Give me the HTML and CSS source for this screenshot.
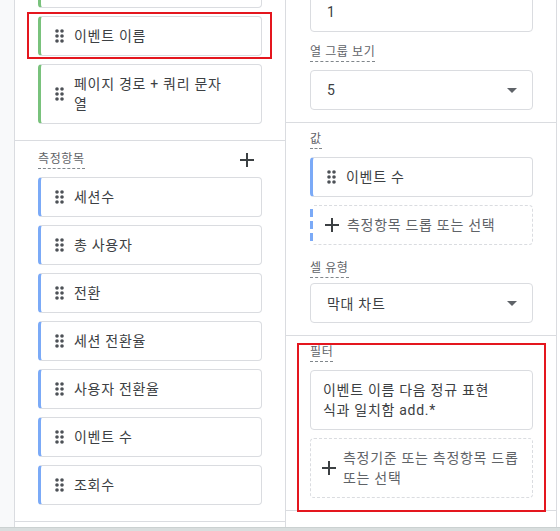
FILE: index.html
```html
<!DOCTYPE html>
<html lang="ko">

<head>
    <meta charset="UTF-8">
    <meta name="viewport" content="width=device-width, initial-scale=1.0">
    <title>탐색 분석</title>
    <link rel="stylesheet" href="styles.css">
</head>

<body>
    <div class="app">
        <div class="rail"></div>

        <!-- 변수 패널 -->
        <div class="panel vars">
            <section class="sec">
                <div class="chip dim stub"></div>
                <div class="chip dim">
                    <svg class="handle" viewBox="0 0 9 14"><circle cx="2" cy="2" r="1.8"/><circle cx="7" cy="2" r="1.8"/><circle cx="2" cy="7" r="1.8"/><circle cx="7" cy="7" r="1.8"/><circle cx="2" cy="12" r="1.8"/><circle cx="7" cy="12" r="1.8"/></svg>
                    <span class="chip-text">이벤트 이름</span>
                </div>
                <div class="chip dim">
                    <svg class="handle" viewBox="0 0 9 14"><circle cx="2" cy="2" r="1.8"/><circle cx="7" cy="2" r="1.8"/><circle cx="2" cy="7" r="1.8"/><circle cx="7" cy="7" r="1.8"/><circle cx="2" cy="12" r="1.8"/><circle cx="7" cy="12" r="1.8"/></svg>
                    <span class="chip-text">페이지 경로 + 쿼리 문자열</span>
                </div>
            </section>

            <section class="sec metrics">
                <div class="sec-head">
                    <span class="label">측정항목</span>
                    <svg class="plus" viewBox="0 0 14 14"><path d="M7 0v14M0 7h14"/></svg>
                </div>
                <div class="chip met">
                    <svg class="handle" viewBox="0 0 9 14"><circle cx="2" cy="2" r="1.8"/><circle cx="7" cy="2" r="1.8"/><circle cx="2" cy="7" r="1.8"/><circle cx="7" cy="7" r="1.8"/><circle cx="2" cy="12" r="1.8"/><circle cx="7" cy="12" r="1.8"/></svg>
                    <span class="chip-text">세션수</span>
                </div>
                <div class="chip met">
                    <svg class="handle" viewBox="0 0 9 14"><circle cx="2" cy="2" r="1.8"/><circle cx="7" cy="2" r="1.8"/><circle cx="2" cy="7" r="1.8"/><circle cx="7" cy="7" r="1.8"/><circle cx="2" cy="12" r="1.8"/><circle cx="7" cy="12" r="1.8"/></svg>
                    <span class="chip-text">총 사용자</span>
                </div>
                <div class="chip met">
                    <svg class="handle" viewBox="0 0 9 14"><circle cx="2" cy="2" r="1.8"/><circle cx="7" cy="2" r="1.8"/><circle cx="2" cy="7" r="1.8"/><circle cx="7" cy="7" r="1.8"/><circle cx="2" cy="12" r="1.8"/><circle cx="7" cy="12" r="1.8"/></svg>
                    <span class="chip-text">전환</span>
                </div>
                <div class="chip met">
                    <svg class="handle" viewBox="0 0 9 14"><circle cx="2" cy="2" r="1.8"/><circle cx="7" cy="2" r="1.8"/><circle cx="2" cy="7" r="1.8"/><circle cx="7" cy="7" r="1.8"/><circle cx="2" cy="12" r="1.8"/><circle cx="7" cy="12" r="1.8"/></svg>
                    <span class="chip-text">세션 전환율</span>
                </div>
                <div class="chip met">
                    <svg class="handle" viewBox="0 0 9 14"><circle cx="2" cy="2" r="1.8"/><circle cx="7" cy="2" r="1.8"/><circle cx="2" cy="7" r="1.8"/><circle cx="7" cy="7" r="1.8"/><circle cx="2" cy="12" r="1.8"/><circle cx="7" cy="12" r="1.8"/></svg>
                    <span class="chip-text">사용자 전환율</span>
                </div>
                <div class="chip met">
                    <svg class="handle" viewBox="0 0 9 14"><circle cx="2" cy="2" r="1.8"/><circle cx="7" cy="2" r="1.8"/><circle cx="2" cy="7" r="1.8"/><circle cx="7" cy="7" r="1.8"/><circle cx="2" cy="12" r="1.8"/><circle cx="7" cy="12" r="1.8"/></svg>
                    <span class="chip-text">이벤트 수</span>
                </div>
                <div class="chip met">
                    <svg class="handle" viewBox="0 0 9 14"><circle cx="2" cy="2" r="1.8"/><circle cx="7" cy="2" r="1.8"/><circle cx="2" cy="7" r="1.8"/><circle cx="7" cy="7" r="1.8"/><circle cx="2" cy="12" r="1.8"/><circle cx="7" cy="12" r="1.8"/></svg>
                    <span class="chip-text">조회수</span>
                </div>
            </section>

            <div class="mark mark-dim"></div>
        </div>

        <!-- 탭 설정 패널 -->
        <div class="panel settings">
            <section class="sec first">
                <div class="field">1</div>
                <span class="label">열 그룹 보기</span>
                <div class="field select">5<i class="caret"></i></div>
            </section>

            <section class="sec">
                <span class="label">값</span>
                <div class="chip met">
                    <svg class="handle" viewBox="0 0 9 14"><circle cx="2" cy="2" r="1.8"/><circle cx="7" cy="2" r="1.8"/><circle cx="2" cy="7" r="1.8"/><circle cx="7" cy="7" r="1.8"/><circle cx="2" cy="12" r="1.8"/><circle cx="7" cy="12" r="1.8"/></svg>
                    <span class="chip-text">이벤트 수</span>
                </div>
                <div class="drop drop-met">
                    <svg class="plus" viewBox="0 0 14 14"><path d="M7 0v14M0 7h14"/></svg>
                    <span>측정항목 드롭 또는 선택</span>
                </div>
                <span class="label gap-top">셀 유형</span>
                <div class="field select tight">막대 차트<i class="caret"></i></div>
            </section>

            <section class="sec">
                <span class="label">필터</span>
                <div class="filter">이벤트 이름 다음 정규 표현식과 일치함 add.*</div>
                <div class="drop">
                    <svg class="plus" viewBox="0 0 14 14"><path d="M7 0v14M0 7h14"/></svg>
                    <span>측정기준 또는 측정항목 드롭 또는 선택</span>
                </div>
            </section>

            <div class="mark mark-filter"></div>
        </div>
    </div>
    <div class="bottom-bar"></div>
</body>

</html>
```

FILE: styles.css
```css
* {
    box-sizing: border-box;
    margin: 0;
    padding: 0;
}

body {
    width: 560px;
    height: 531px;
    overflow: hidden;
    background: #fff;
    font-family: Roboto, "Noto Sans CJK KR", sans-serif;
    font-size: 14px;
    letter-spacing: 0.7px;
    color: #3c4043;
}

.app {
    display: flex;
    height: 527px;
}

.rail {
    width: 14px;
    background: #f8f9fa;
}

.bottom-bar {
    height: 4px;
    background: #d9dede;
    border-top: 1px solid #cbd1d1;
}

/* 패널 공통 */
.panel {
    position: relative;
    width: 272px;
    border-left: 1px solid #dadce0;
    border-right: 1px solid #dadce0;
}

.settings {
    width: 271px;
    border-left: none;
}

.sec {
    display: flex;
    flex-direction: column;
    gap: 8px;
    padding: 0 23px 16px;
    border-bottom: 1px solid #dadce0;
}

.metrics {
    padding-top: 10px;
}

.settings .sec {
    padding: 8px 23px 12px 24px;
}

.settings .sec.first {
    padding-top: 0;
}

.sec-head {
    display: flex;
    justify-content: space-between;
    align-items: center;
}

.label {
    align-self: flex-start;
    font-size: 12px;
    line-height: 17px;
    letter-spacing: 0.6px;
    color: #5f6368;
    border-bottom: 1px dashed #80868b;
}

.gap-top {
    margin-top: 7px;
}

.plus {
    width: 14px;
    height: 14px;
    flex: none;
    stroke: #3c4043;
    stroke-width: 2;
    fill: none;
}

.sec-head .plus {
    margin-right: 8px;
}

/* 칩 */
.chip {
    display: flex;
    align-items: center;
    min-height: 40px;
    padding: 9px 30px 9px 14px;
    border: 1px solid #dadce0;
    border-left: 3px solid #7baaf7;
    border-radius: 4px;
    line-height: 20px;
}

.chip.dim {
    border-left-color: #79c27c;
}

.chip.stub {
    margin-top: -32px;
}

.handle {
    width: 9px;
    height: 14px;
    flex: none;
    margin-right: 10px;
    fill: #4d5156;
}

.chip-text {
    flex: 1;
    min-width: 0;
}

/* 입력 필드 */
.field {
    display: flex;
    align-items: center;
    justify-content: space-between;
    height: 40px;
    padding: 0 15px 0 16px;
    border: 1px solid #dadce0;
    border-radius: 4px;
}

.first .field:first-child {
    margin-top: -8px;
}

.first .label {
    margin-top: 4px;
}

.tight {
    margin-top: -3px;
}

.caret {
    width: 0;
    height: 0;
    border-left: 5px solid transparent;
    border-right: 5px solid transparent;
    border-top: 5px solid #5f6368;
}

/* 드롭 영역 */
.drop {
    display: flex;
    align-items: center;
    gap: 7px;
    min-height: 40px;
    padding: 9px 4px 9px 11px;
    border: 1px dashed #dadce0;
    border-radius: 4px;
    line-height: 20px;
    color: #5f6368;
}

.drop-met {
    gap: 8px;
    padding-left: 12px;
    border-left: 3px solid transparent;
    background: linear-gradient(to bottom, transparent 4px, #7baaf7 4px) 0 0 / 3px 12px repeat-y;
    background-origin: border-box;
}

.filter {
    padding: 9px 32px 9px 12px;
    border: 1px solid #dadce0;
    border-radius: 4px;
    line-height: 20px;
    color: #3c4043;
}

/* 강조 표시 */
.mark {
    position: absolute;
    border: 2px solid #e4161e;
}

.mark-dim {
    left: 12px;
    top: 12px;
    width: 245px;
    height: 47px;
}

.mark-filter {
    left: 11px;
    top: 343px;
    width: 249px;
    height: 169px;
}
```
